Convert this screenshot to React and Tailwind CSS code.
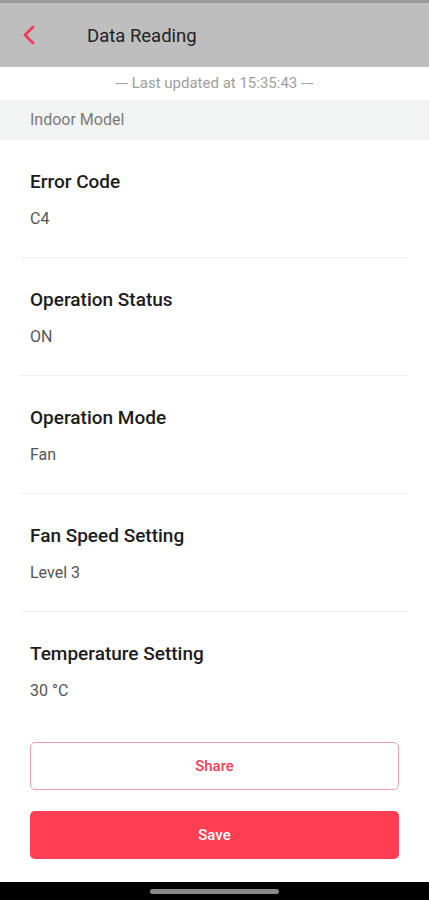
import React from 'react';

const items = [
  { label: 'Error Code', value: 'C4' },
  { label: 'Operation Status', value: 'ON' },
  { label: 'Operation Mode', value: 'Fan' },
  { label: 'Fan Speed Setting', value: 'Level 3' },
  { label: 'Temperature Setting', value: '30 °C', last: true },
];

export default function App() {
  return (
    <div className="w-[429px] h-[900px] bg-white flex flex-col overflow-hidden" style={{ fontFamily: 'Roboto, "Noto Sans", sans-serif' }}>
      <div className="h-[3px] bg-[#9a9a9a]" />
      <div className="h-[64px] bg-[#bebebe] flex items-center">
        <button className="w-[60px] h-full flex items-center pl-[22px]">
          <svg width="14" height="20" viewBox="0 0 14 20" fill="none">
            <path d="M11 2 L3 10 L11 18" stroke="#ef3e55" strokeWidth="2.8" strokeLinecap="round" strokeLinejoin="round" />
          </svg>
        </button>
        <h1 className="ml-[27px] text-[18.5px] text-[#222] leading-none pt-[2px]">Data Reading</h1>
      </div>
      <div className="h-[33px] flex items-center justify-center text-[15px] text-[#9e9e9e]">
        --- Last updated at 15:35:43 ---
      </div>
      <div className="h-[40px] bg-[#f2f3f3] flex items-center px-[30px] text-[16px] text-[#7a7a7a]">
        Indoor Model
      </div>
      <div className="flex flex-col">
        {items.map((it) => (
          <div key={it.label} className="mx-[20px]">
            <div className={`px-[10px] pt-[30px] ${it.last ? '' : 'pb-[27px] border-b border-[#f0f0f0]'}`}>
              <div className="h-[24px] leading-[24px] text-[19px] font-medium text-[#1c1c1c]">{it.label}</div>
              <div className="mt-[14px] h-[22px] leading-[22px] text-[16px] text-[#555]">{it.value}</div>
            </div>
          </div>
        ))}
      </div>
      <div className="px-[30px] pt-[40px] flex flex-col gap-[21px]">
        <button className="h-[48px] rounded-[5px] border border-[#e6a3ab] bg-white text-[#ef3e55] text-[15px] font-medium">
          Share
        </button>
        <button className="h-[48px] rounded-[5px] bg-[#fe3e52] text-white text-[15px] font-medium">
          Save
        </button>
      </div>
      <div className="flex-1" />
      <div className="h-[18px] bg-black flex items-center justify-center">
        <div className="w-[129px] h-[5px] rounded-full bg-[#8a8a8a]" />
      </div>
    </div>
  );
}
